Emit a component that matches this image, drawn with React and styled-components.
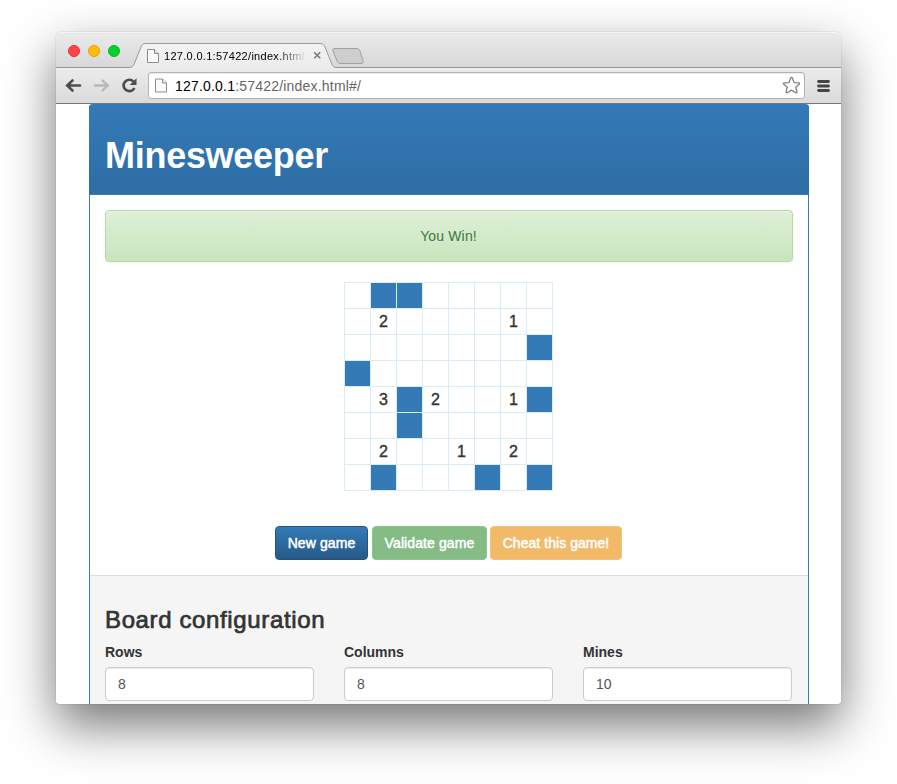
import React from "react";
import styled, { createGlobalStyle } from "styled-components";

const GlobalStyle = createGlobalStyle`
  *, *::before, *::after { box-sizing: border-box; }
  html, body { margin: 0; background: #fff; overflow: hidden; }
  body {
    font-family: "Liberation Sans", Arial, sans-serif;
    font-size: 14px;
    line-height: 20px;
    color: #333;
  }
`;

const Desktop = styled.div`
  height: 784px;
  padding: 32px 56px 80px;
  overflow: hidden;
`;

const Window = styled.div`
  height: 672px;
  display: flex;
  flex-direction: column;
  border-radius: 5px 5px 4px 4px;
  box-shadow: 0 0 1px rgba(0, 0, 0, 0.45), 0 21px 50px rgba(0, 0, 0, 0.55);
`;

const TitleBar = styled.div`
  flex: none;
  height: 36px;
  display: flex;
  align-items: flex-end;
  padding-left: 12px;
  border-radius: 5px 5px 0 0;
  border-bottom: 1px solid #999;
  background: linear-gradient(#ebebeb, #d8d8d8);
  box-shadow: inset 0 1px 0 #f5f5f5;
`;

const Lights = styled.div`
  display: flex;
  gap: 8px;
  margin-bottom: 10px;
`;

const Light = styled.span`
  width: 12px;
  height: 12px;
  border-radius: 50%;
  background: ${(p) => p.$fill};
  border: 1px solid ${(p) => p.$edge};
`;

const Tab = styled.div`
  position: relative;
  width: 208px;
  height: 25px;
  margin: 0 -5px -1px 9px;
  padding: 0 14px 0 18px;
  display: flex;
  align-items: center;
`;

const TabShape = styled.svg`
  position: absolute;
  inset: 0;
`;

const TabTitle = styled.span`
  position: relative;
  width: 146px;
  margin: 0 3px 0 5px;
  overflow: hidden;
  white-space: nowrap;
  font-size: 11px;
  line-height: 16px;
  letter-spacing: 0.3px;
  color: #000;
  mask-image: linear-gradient(to right, #000 112px, transparent 143px);
`;

const Glyph = styled.svg`
  position: relative;
  flex: none;
  display: block;
`;

const NewTab = styled.svg`
  flex: none;
  margin: 0 0 2px -1px;
`;

const Toolbar = styled.div`
  flex: none;
  height: 36px;
  display: flex;
  align-items: center;
  padding: 0 9px 0 7px;
  border-bottom: 1px solid #777;
  background: linear-gradient(#ececec, #dadada);
`;

const NavIcons = styled.div`
  display: flex;
  gap: 8px;
  width: 85px;
`;

const AddressBar = styled.div`
  width: 657px;
  height: 27px;
  display: flex;
  align-items: center;
  padding: 0 3px 0 6px;
  background: #fff;
  border: 1px solid #b3b3b3;
  border-radius: 3px;
  box-shadow: inset 0 1px 1px rgba(0, 0, 0, 0.08);
`;

const Url = styled.span`
  flex: 1;
  margin-left: 8px;
  color: #666;
  letter-spacing: 0.2px;
  white-space: nowrap;
`;

const Host = styled.span`
  color: #000;
`;

const Viewport = styled.div`
  flex: 1;
  min-height: 0;
  overflow: hidden;
  padding: 0 32px 0 33px;
  background: #fff;
  border-radius: 0 0 4px 4px;
`;

const Panel = styled.main`
  height: 700px;
  border: 1px solid #337ab7;
  border-top: 0;
  border-radius: 4px 4px 0 0;
`;

const PanelHeader = styled.header`
  height: 91px;
  margin: 0 -1px;
  padding: 32px 16px 0;
  border-radius: 4px 4px 0 0;
  border-bottom: 1px solid #337ab7;
  background: linear-gradient(#337ab7, #2e6da4);
  color: #fff;
`;

const Title = styled.h1`
  margin: 0;
  font-size: 36px;
  line-height: 40px;
  letter-spacing: -0.28px;
`;

const PanelBody = styled.section`
  height: 380px;
  padding: 15px;
`;

const Alert = styled.div`
  height: 52px;
  padding: 15px 16px 15px 15px;
  text-align: center;
  letter-spacing: 0.15px;
  color: #3c763d;
  border: 1px solid #b2dba1;
  border-radius: 4px;
  background: linear-gradient(#dff0d8, #c8e5bc);
  box-shadow: inset 0 1px 0 rgba(255, 255, 255, 0.25), 0 1px 2px rgba(0, 0, 0, 0.05);
  text-shadow: 0 1px 0 rgba(255, 255, 255, 0.2);
`;

const Board = styled.div`
  display: grid;
  width: 209px;
  grid-template-columns: repeat(8, 25px);
  grid-auto-rows: 25px;
  gap: 1px;
  margin: 20px 0 0 239px;
  padding: 1px;
  background: #d9edf7;
`;

const Cell = styled.div`
  display: flex;
  align-items: center;
  justify-content: center;
  padding-top: 1px;
  font-size: 16px;
  -webkit-text-stroke: 0.35px #333;
  background: ${(p) => (p.$mine ? "#337ab7" : "#fff")};
`;

const Actions = styled.div`
  display: flex;
  margin: 35px 0 0 170px;
`;

const Button = styled.button`
  width: ${(p) => p.$width}px;
  height: 34px;
  margin: 0 0 0 ${(p) => p.$gap || 0}px;
  padding: 0 0 1px;
  font: inherit;
  letter-spacing: ${(p) => p.$tracking || 0}px;
  white-space: nowrap;
  color: #fff;
  -webkit-text-stroke: 0.5px #fff;
  border: 1px solid ${(p) => p.$edge};
  border-radius: 4px;
  background: ${(p) => p.$fill};
`;

const PanelFooter = styled.footer`
  height: 240px;
  padding: 28px 15px;
  border-top: 1px solid #ddd;
  background: #f5f5f5;
`;

const Subtitle = styled.h3`
  margin: 0 0 6px;
  font-size: 24px;
  line-height: 32px;
  font-weight: 400;
  letter-spacing: 0.63px;
  -webkit-text-stroke: 0.7px #333;
`;

const Fields = styled.div`
  display: grid;
  grid-template-columns: repeat(3, 209px);
  gap: 30px;
`;

const Field = styled.label`
  display: flex;
  flex-direction: column;
  gap: 5px;
  font-weight: 700;
`;

const Input = styled.input`
  width: 100%;
  height: 34px;
  padding: 6px 12px;
  font: 400 14px "Liberation Sans", Arial, sans-serif;
  color: #555;
  border: 1px solid #ccc;
  border-radius: 4px;
  background: #fff;
  box-shadow: inset 0 1px 1px rgba(0, 0, 0, 0.075);
`;

const BOARD = [
  ".**.....",
  ".2....1.",
  ".......*",
  "*.......",
  ".3*2..1*",
  "..*.....",
  ".2..1.2.",
  ".*...*.*",
];

const FIELDS = [
  ["Rows", "8"],
  ["Columns", "8"],
  ["Mines", "10"],
];

const PageIcon = ({ width, height }) => (
  <Glyph width={width} height={height} viewBox="0 0 12 14">
    <path d="M.5.5h7l4 4v9H.5z" fill="#fafafa" stroke="#8c8c8c" />
    <path d="M7.5.5v4h4" fill="#eee" stroke="#8c8c8c" />
  </Glyph>
);

export default function App() {
  return (
    <>
      <GlobalStyle />
      <Desktop>
        <Window>
          <TitleBar>
            <Lights>
              <Light $fill="#ff4548" $edge="#e82f38" />
              <Light $fill="#ffbd00" $edge="#e5a011" />
              <Light $fill="#00d42b" $edge="#0ab62a" />
            </Lights>
            <Tab>
              <TabShape width="208" height="25" viewBox="0 0 208 25">
                <defs>
                  <linearGradient id="tab" x2="0" y2="1">
                    <stop stopColor="#f3f3f3" />
                    <stop offset="1" stopColor="#ececec" />
                  </linearGradient>
                </defs>
                <path
                  d="M0 25v-.5c3 0 4-1 5-3L12 4C13 1.500 14 .5 17 .5h174c3 0 4 1 5 3.500l7 17.500c1 2 2 3 5 3v.5z"
                  fill="url(#tab)"
                />
                <path
                  d="M0 24.500c3 0 4-1 5-3L12 4C13 1.500 14 .5 17 .5h174c3 0 4 1 5 3.500l7 17.500c1 2 2 3 5 3"
                  fill="none"
                  stroke="#999"
                />
              </TabShape>
              <PageIcon width="12" height="14" />
              <TabTitle>127.0.0.1:57422/index.html</TabTitle>
              <Glyph width="9" height="9" viewBox="0 0 9 9">
                <path d="M1.200 1.200l6 6m0-6l-6 6" stroke="#777" strokeWidth="1.600" />
              </Glyph>
            </Tab>
            <NewTab width="34" height="18" viewBox="0 0 34 18">
              <path
                d="M4 1.500h21c2 0 3 .5 4 2.500l3 9.500c.5 2-.3 3-2 3H10c-2 0-3-.7-4-2.500L2 4c-.7-1.500.3-2.500 2-2.500z"
                fill="#cecece"
                stroke="#a0a0a0"
              />
            </NewTab>
          </TitleBar>

          <Toolbar>
            <NavIcons>
              <Glyph width="20" height="20" viewBox="0 0 20 20">
                <path d="M17 9.500H4.500m5-5-5.300 5 5.300 5" fill="none" stroke="#4d4d4d" strokeWidth="2.600" strokeLinecap="round" />
              </Glyph>
              <Glyph width="20" height="20" viewBox="0 0 20 20">
                <path d="M4 9.500h12.500m-5-5 5.300 5-5.300 5" fill="none" stroke="#b8b8b8" strokeWidth="2.400" strokeLinecap="round" />
              </Glyph>
              <Glyph width="20" height="20" viewBox="0 0 20 20">
                <path d="M14.400 5.500A5.700 5.700 0 1 0 15.400 12" fill="none" stroke="#4d4d4d" strokeWidth="2.700" />
                <path d="M17.500 2.200v6.800h-6.800z" fill="#4d4d4d" />
              </Glyph>
            </NavIcons>
            <AddressBar>
              <PageIcon width="12" height="15" />
              <Url>
                <Host>127.0.0.1</Host>:57422/index.html#/
              </Url>
              <Glyph width="19" height="19" viewBox="0 0 18 18">
                <path
                  d="M9 1.200Q9.500 1.200 9.900 2.200L11.400 6.200 15.800 6.500Q17.300 6.800 16.200 7.800L13 10.700 14.200 15Q14.300 16.500 13 15.800L9 13.400 5 15.800Q3.700 16.500 3.800 15L5 10.700 1.800 7.800Q.7 6.800 2.200 6.500L6.600 6.200 8.100 2.200Q8.500 1.200 9 1.200z"
                  fill="#fff"
                  stroke="#808080"
                  strokeWidth="1.200"
                  strokeLinejoin="round"
                />
              </Glyph>
            </AddressBar>
            <Glyph width="27" height="14" viewBox="0 0 27 14">
              <path d="M13.500 2.500h10m-10 4.500h10m-10 4.500h10" stroke="#444" strokeWidth="2.800" strokeLinecap="round" />
            </Glyph>
          </Toolbar>

          <Viewport>
            <Panel>
              <PanelHeader>
                <Title>Minesweeper</Title>
              </PanelHeader>
              <PanelBody>
                <Alert>You Win!</Alert>
                <Board>
                  {BOARD.flatMap((row, r) =>
                    [...row].map((mark, c) => (
                      <Cell key={`${r}-${c}`} $mine={mark === "*"}>
                        {/\d/.test(mark) ? mark : null}
                      </Cell>
                    ))
                  )}
                </Board>
                <Actions>
                  <Button $width={93} $tracking={0.1} $fill="linear-gradient(#337ab7, #265a88)" $edge="#245580">
                    New game
                  </Button>
                  <Button $width={115} $gap={4} $tracking={0.1} $fill="#85bb85" $edge="#8bc78b">
                    Validate game
                  </Button>
                  <Button $width={132} $gap={3} $tracking={0.05} $fill="#f2b969" $edge="#f4c177">
                    Cheat this game!
                  </Button>
                </Actions>
              </PanelBody>
              <PanelFooter>
                <Subtitle>Board configuration</Subtitle>
                <Fields>
                  {FIELDS.map(([label, value]) => (
                    <Field key={label}>
                      {label}
                      <Input defaultValue={value} />
                    </Field>
                  ))}
                </Fields>
              </PanelFooter>
            </Panel>
          </Viewport>
        </Window>
      </Desktop>
    </>
  );
}
